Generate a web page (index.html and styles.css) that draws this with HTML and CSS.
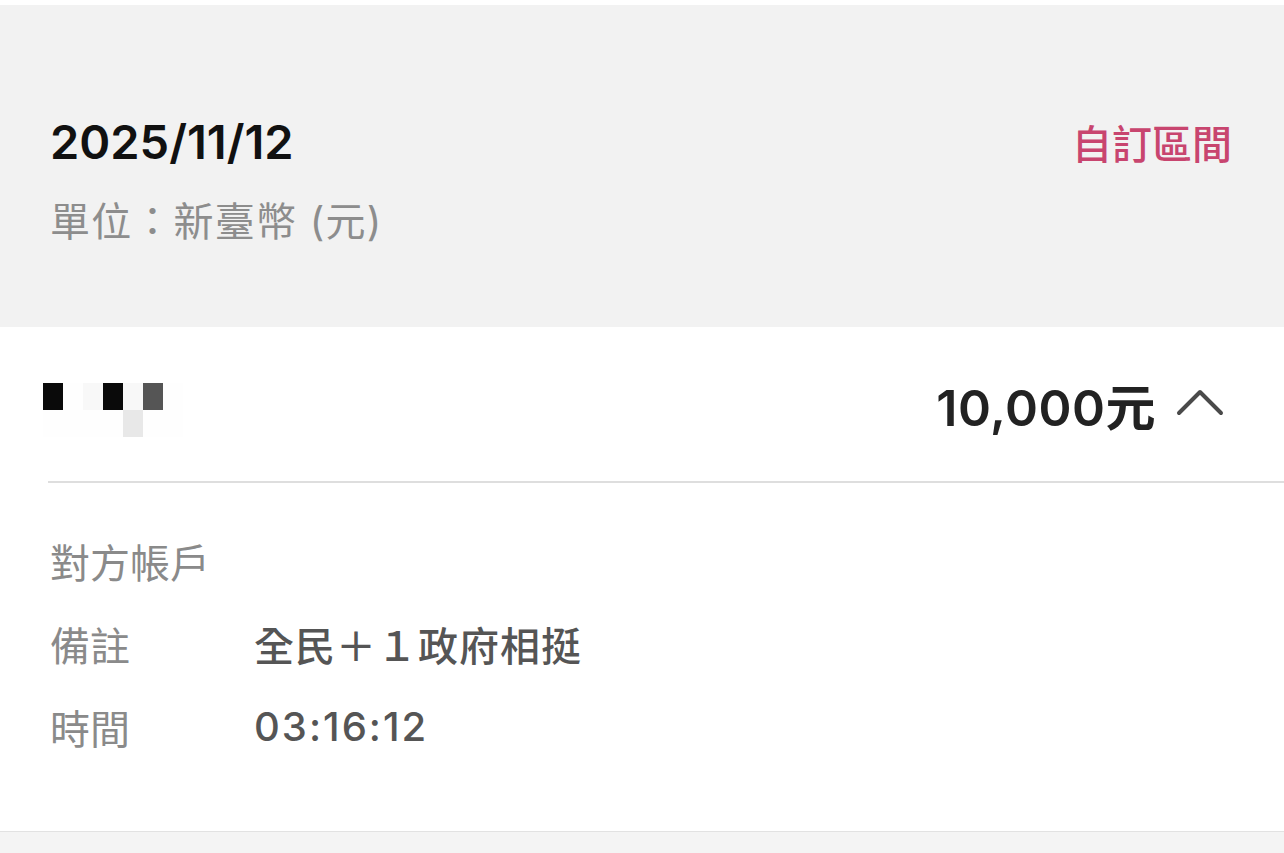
FILE: index.html
```html
<!DOCTYPE html>
<html lang="zh-Hant">
<head>
    <meta charset="UTF-8">
    <meta name="viewport" content="width=device-width, initial-scale=1.0">
    <title>交易明細</title>
    <link rel="stylesheet" href="styles.css">
</head>
<body>
    <header class="summary-head">
        <div class="head-row">
            <h1 class="date">2025/11/12</h1>
            <a class="range-link" href="#">自訂區間</a>
        </div>
        <p class="unit">單位：新臺幣 (元)</p>
    </header>

    <main class="record">
        <div class="record-top">
            <div class="masked-name" aria-label="已遮蔽名稱">
                <span class="px k"></span><span class="px w"></span><span class="px l"></span><span class="px k"></span><span class="px l"></span><span class="px g"></span><span class="px w"></span>
                <span class="px w"></span><span class="px w"></span><span class="px w"></span><span class="px w"></span><span class="px m"></span><span class="px w"></span><span class="px w"></span>
            </div>
            <div class="amount">
                <span>10,000元</span>
                <svg class="chevron" width="48" height="28" viewBox="0 0 48 28">
                    <path d="M3 25 L24 4 L45 25" fill="none" stroke="#4a4a4a" stroke-width="4" stroke-linecap="round" stroke-linejoin="round"/>
                </svg>
            </div>
        </div>
        <div class="divider"></div>

        <dl class="details">
            <div class="detail-row">
                <dt>對方帳戶</dt>
                <dd></dd>
            </div>
            <div class="detail-row">
                <dt>備註</dt>
                <dd>全民＋１政府相挺</dd>
            </div>
            <div class="detail-row">
                <dt>時間</dt>
                <dd class="mono-ish">03:16:12</dd>
            </div>
        </dl>
    </main>

    <div class="page-rest"></div>
</body>
</html>
```

FILE: styles.css
```css
* {
    margin: 0;
    padding: 0;
    box-sizing: border-box;
}

/* Página */
body {
    font-family: "Inter", "Noto Sans CJK TC", sans-serif;
    background: #ffffff;
    color: #222;
    padding-top: 5px;
}

/* Cabeçalho cinza */
.summary-head {
    background: #f2f2f2;
    padding: 108px 52px 81px 50px;
}

.head-row {
    display: flex;
    justify-content: space-between;
    align-items: center;
}

.date {
    font-size: 47px;
    font-weight: 600;
    line-height: 58px;
    color: #111;
}

.range-link {
    font-family: "Noto Sans CJK TC", sans-serif;
    font-size: 40px;
    font-weight: 500;
    color: #c8456f;
    text-decoration: none;
}

.unit {
    margin-top: 27px;
    font-size: 40px;
    line-height: 48px;
    color: #8d8d8d;
    letter-spacing: 1.2px;
}

/* Registro */
.record {
    background: #fff;
    border-bottom: 1px solid #e2e2e2;
    padding-bottom: 63px;
}

.record-top {
    height: 154px;
    display: flex;
    justify-content: space-between;
    align-items: center;
    padding: 12px 60px 0 43px;
}

.masked-name {
    display: grid;
    grid-template-columns: repeat(7, 20px);
    grid-auto-rows: 27px;
}

.px.k { background: #0a0a0a; }
.px.w { background: #fefefe; }
.px.l { background: #f8f8f8; }
.px.g { background: #555; }
.px.m { background: #e8e8e8; }

.amount {
    display: flex;
    align-items: center;
    gap: 20px;
    margin-bottom: 12px;
    font-size: 50px;
    font-weight: 600;
    letter-spacing: 0.5px;
    color: #222;
}

.chevron {
    margin-top: -4px;
}

.divider {
    margin-left: 48px;
    border-top: 2px solid #dedede;
}

/* Detalhes */
.details {
    padding: 36px 0 0 50px;
}

.detail-row {
    display: flex;
    align-items: center;
    height: 83px;
    font-size: 40px;
}

.detail-row dt {
    width: 204px;
    color: #8a8a8a;
}

.detail-row dd {
    color: #555;
    font-weight: 500;
    letter-spacing: 1px;
}

.detail-row .mono-ish {
    letter-spacing: 2px;
}

.page-rest {
    background: #f4f4f4;
    height: 40px;
}
```
